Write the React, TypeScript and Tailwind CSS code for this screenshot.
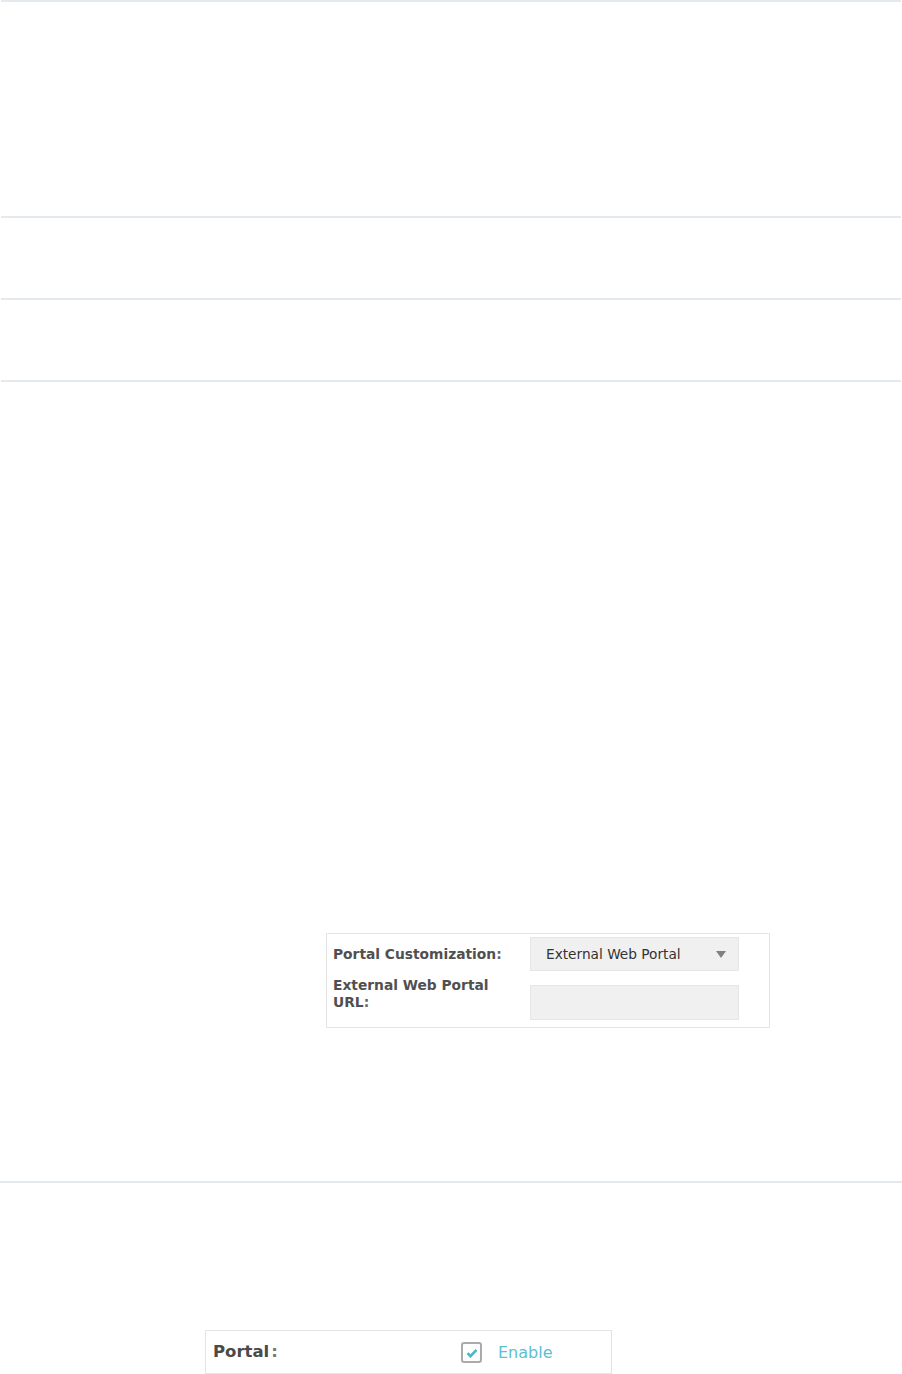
import React from 'react';

const Rule: React.FC<{ full?: boolean }> = ({ full }) => (
  <div className={`h-[2px] bg-[#e4e9ed] ${full ? '' : 'mx-[1px]'}`} />
);

const CustomizationPanel: React.FC = () => (
  <div className="ml-[326px] w-[444px] border border-[#e4e4e4] bg-white pt-[3px] pb-[7px] pl-[6px] pr-[30px]">
    {/* Portal customization select */}
    <div className="flex h-[34px] items-center">
      <div className="w-[197px] text-[13.8px] font-bold leading-[17px] text-[#505050]">
        Portal Customization<span className="text-[#666]">:</span>
      </div>
      <div className="flex h-[34px] w-[209px] items-center justify-between border border-[#e6e6e6] bg-[#f0f0f0] pl-[15px] pr-[12px]">
        <span className="text-[13.7px] text-[#333]">External Web Portal</span>
        <svg width="10" height="7" viewBox="0 0 10 7">
          <path d="M0 0h10L5 7z" fill="#808080" />
        </svg>
      </div>
    </div>

    {/* External portal URL input */}
    <div className="mt-[6px] flex items-start">
      <div className="w-[197px] text-[13.8px] font-bold leading-[17px] text-[#505050]">
        External Web Portal
        <br />
        URL<span className="text-[#666]">:</span>
      </div>
      <div className="mt-[8px] h-[35px] w-[209px] border border-[#e6e6e6] bg-[#f0f0f0]" />
    </div>
  </div>
);

const PortalPanel: React.FC = () => (
  <div className="ml-[205px] flex h-[44px] w-[407px] items-center border border-[#e4e4e4] bg-white pl-[7px]">
    <div className="w-[248px] text-[16.5px] font-bold text-[#4a4a4a]">
      Portal<span className="ml-[2px] text-[#777]">:</span>
    </div>
    <div className="mt-[1px] flex h-[21px] w-[21px] items-center justify-center rounded-[3px] border-2 border-[#aaaaaa] bg-white">
      <svg width="12" height="10" viewBox="0 0 12 10">
        <path d="M1.5 5.2l3 3L10.5 1.8" fill="none" stroke="#49b8c9" strokeWidth="2.6" />
      </svg>
    </div>
    <span className="mt-[2px] ml-[16px] text-[16px] text-[#5bc0cf]">Enable</span>
  </div>
);

export default function App() {
  return (
    <div className="h-[1374px] w-[902px] overflow-hidden bg-white font-['DejaVu_Sans',Verdana,sans-serif]">
      <Rule />
      <div className="h-[214px]" />
      <Rule />
      <div className="h-[80px]" />
      <Rule />
      <div className="h-[80px]" />
      <Rule />
      <div className="h-[551px]" />
      <CustomizationPanel />
      <div className="h-[153px]" />
      <Rule full />
      <div className="h-[147px]" />
      <PortalPanel />
    </div>
  );
}
